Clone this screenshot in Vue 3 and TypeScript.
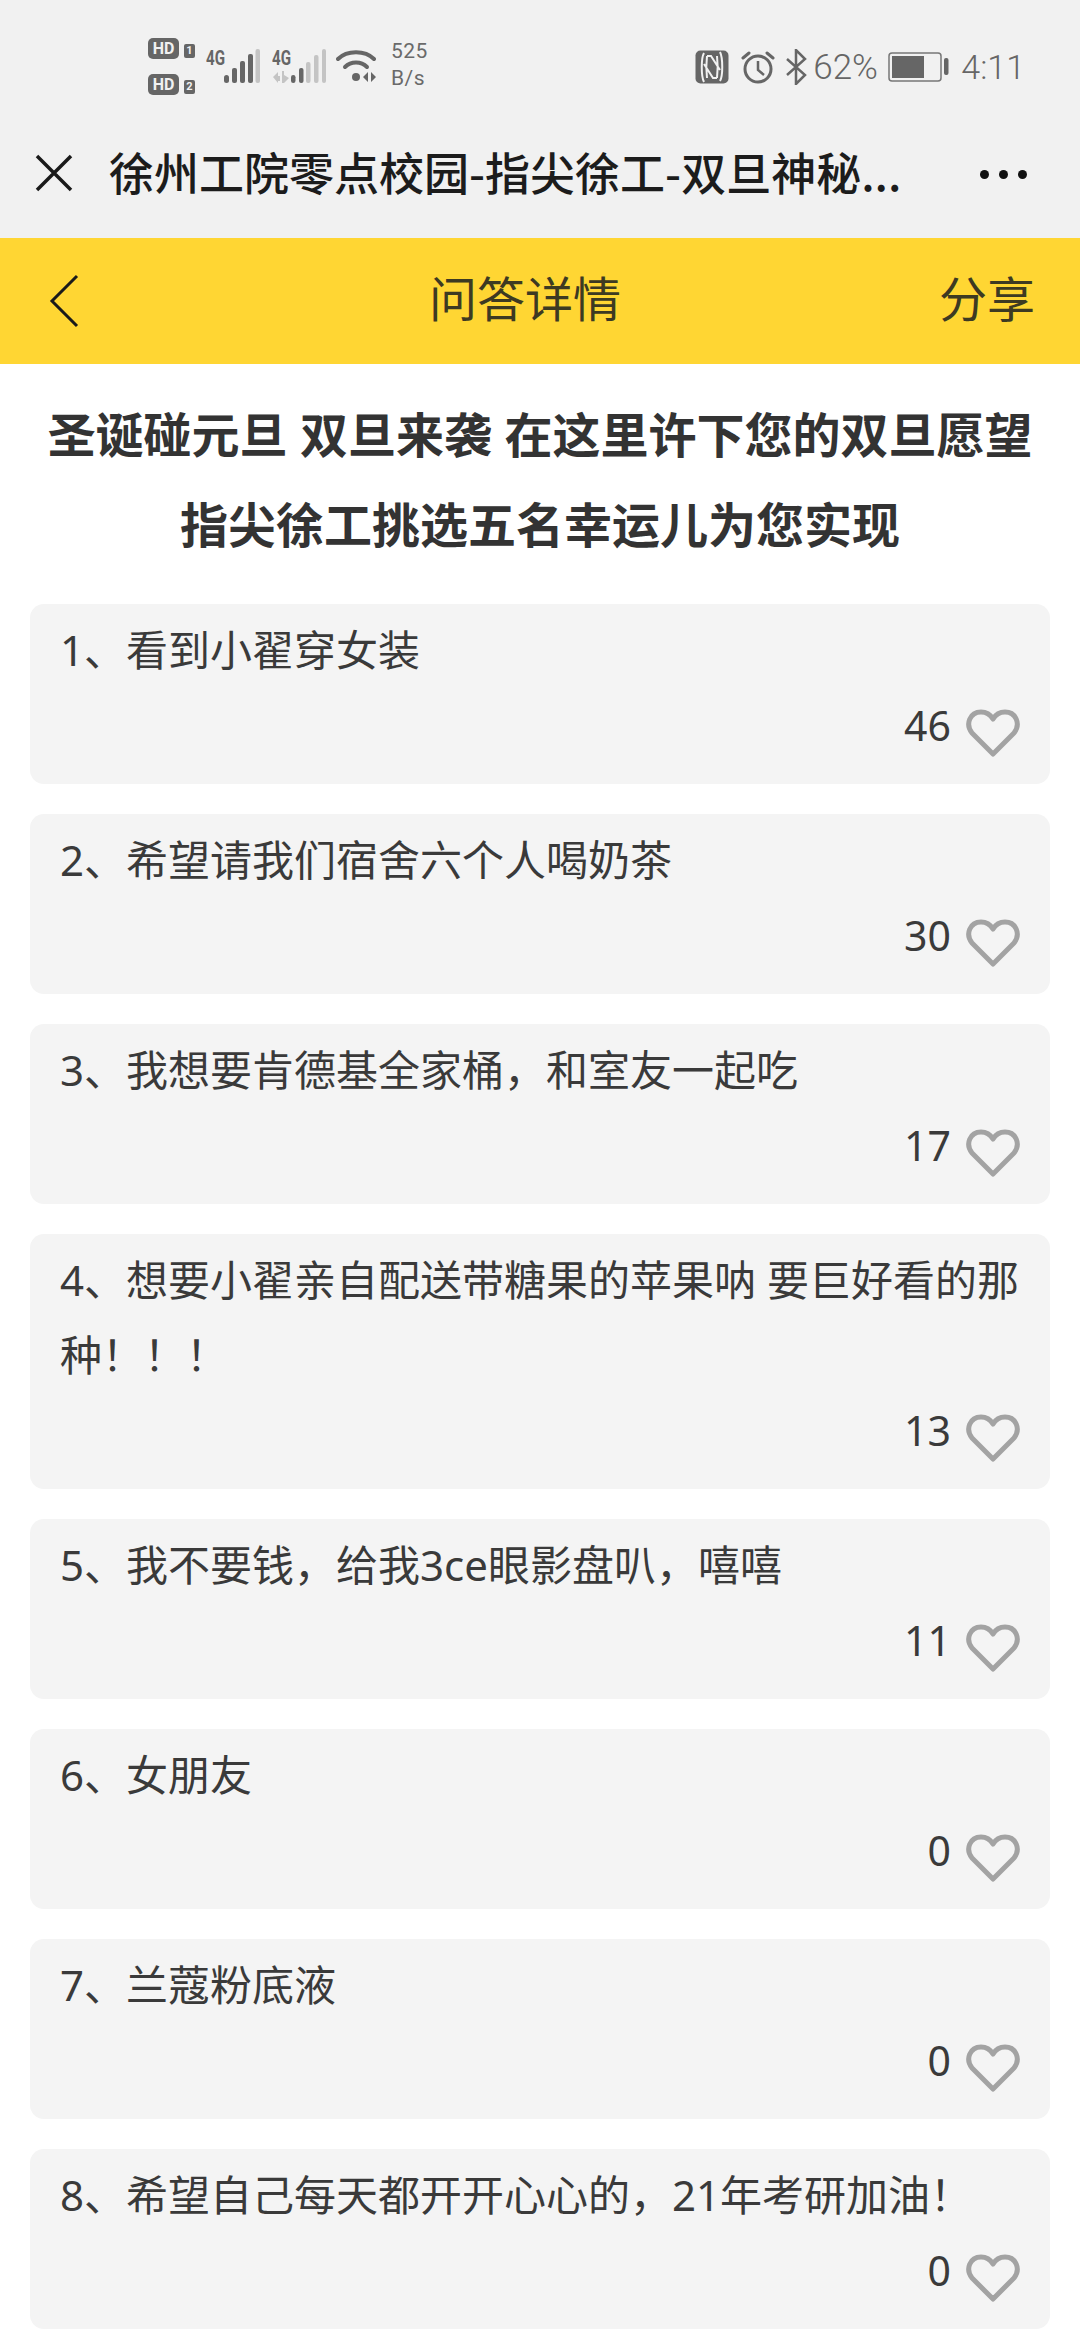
<script setup lang="ts">
interface Item { text: string; count: number }
const items: Item[] = [
  { text: '1、看到小翟穿女装', count: 46 },
  { text: '2、希望请我们宿舍六个人喝奶茶', count: 30 },
  { text: '3、我想要肯德基全家桶，和室友一起吃', count: 17 },
  { text: '4、想要小翟亲自配送带糖果的苹果呐 要巨好看的那种！！！', count: 13 },
  { text: '5、我不要钱，给我3ce眼影盘叭，嘻嘻', count: 11 },
  { text: '6、女朋友', count: 0 },
  { text: '7、兰蔻粉底液', count: 0 },
  { text: '8、希望自己每天都开开心心的，21年考研加油！', count: 0 },
]
</script>

<template>
  <div class="page">
    <div class="status">
      <div class="status-left">
        <div class="hd-col">
          <div class="hd-row"><span class="hd">HD</span><span class="sim">1</span></div>
          <div class="hd-row"><span class="hd">HD</span><span class="sim">2</span></div>
        </div>
        <svg class="sig" width="54" height="44" viewBox="0 -8 54 44">
          <text x="0" y="17" class="g4" textLength="19" lengthAdjust="spacingAndGlyphs">4G</text>
          <g fill="#666"><rect x="18" y="27" width="5" height="8" rx="2.500"/><rect x="26" y="20" width="5" height="15" rx="2"/><rect x="34" y="13" width="5" height="22" rx="2"/><rect x="42" y="6" width="5" height="29" rx="2"/></g>
          <rect x="49.500" y="1" width="4.500" height="34" rx="2" fill="#c4c4c4"/>
        </svg>
        <svg class="sig2" width="54" height="44" viewBox="0 -8 54 44">
          <text x="0" y="17" class="g4" textLength="19" lengthAdjust="spacingAndGlyphs">4G</text>
          <path d="M1 29l5-5v4h2v5H6v2zM10 23h2v4l5 3-5 5h-2z" fill="#c4c4c4"/>
          <g fill="#666"><rect x="19" y="27" width="4.500" height="8" rx="2.200"/><rect x="27" y="20" width="4.500" height="15" rx="2"/></g>
          <g fill="#c4c4c4"><rect x="34" y="14" width="4.500" height="21" rx="2"/><rect x="42" y="7" width="4.500" height="28" rx="2"/><rect x="50" y="1" width="4" height="34" rx="2"/></g>
        </svg>
        <svg class="wifi" width="42" height="36" viewBox="0 0 42 36">
          <g fill="none" stroke="#666" stroke-width="4" stroke-linecap="round">
            <path d="M2 11C11 2 29 2 38 11"/>
            <path d="M9 19C15 13 25 13 31 19"/>
          </g>
          <circle cx="20" cy="29" r="4" fill="#666"/>
          <path d="M32 24v10l-5-5zM35 24l5 5-5 5z" fill="#666"/>
        </svg>
        <div class="speed"><span>525</span><span>B/s</span></div>
      </div>
      <div class="status-right">
        <svg width="34" height="34" viewBox="0 0 34 34">
          <rect x="0.500" y="0.500" width="33" height="33" rx="5" fill="#666"/>
          <path d="M9 32C6 26 6 8 9 3" fill="none" stroke="#f1f1f1" stroke-width="2"/>
          <path d="M25 2C28 8 28 26 25 31" fill="none" stroke="#f1f1f1" stroke-width="2"/>
          <path d="M12 6h4l9 14M12 6c-1 8-1 14 0 22M22 28h-4L9 14M22 28c1-8 1-14 0-22" fill="none" stroke="#f1f1f1" stroke-width="2"/>
        </svg>
        <svg class="alarm" width="34" height="34" viewBox="0 0 34 34">
          <g fill="none" stroke="#666" stroke-width="3">
            <circle cx="17" cy="19" r="13"/>
            <path d="M17 11v9l6 5" stroke-width="2.500"/>
            <path d="M2 8l6-5M32 8l-6-5" stroke-linecap="round"/>
          </g>
        </svg>
        <svg class="bt" width="22" height="36" viewBox="0 0 22 36">
          <path d="M2 10l18 16-9 9V1l9 9L2 26" fill="none" stroke="#666" stroke-width="2.500"/>
        </svg>
        <span class="pct">62%</span>
        <svg class="batt" width="61" height="30" viewBox="0 0 61 30">
          <rect x="1" y="1" width="52" height="28" rx="3" fill="none" stroke="#777" stroke-width="1.500"/>
          <rect x="4" y="4" width="32" height="22" fill="#666"/>
          <rect x="56" y="6" width="4.500" height="17" rx="2" fill="#666"/>
        </svg>
        <span class="time">4:11</span>
      </div>
    </div>

    <div class="titlebar">
      <svg class="close" width="38" height="38" viewBox="0 0 38 38">
        <path d="M2 2l34 34M36 2L2 36" stroke="#1a1a1a" stroke-width="3.500" fill="none"/>
      </svg>
      <div class="title">徐州工院零点校园-指尖徐工-双旦神秘...</div>
      <div class="more"><i></i><i></i><i></i></div>
    </div>

    <div class="nav">
      <svg class="back" width="30" height="54" viewBox="0 0 30 54">
        <path d="M28 2L3 27l25 25" fill="none" stroke="#1a1a1a" stroke-width="3"/>
      </svg>
      <div class="nav-title">问答详情</div>
      <div class="share">分享</div>
    </div>

    <div class="heading">
      <div>圣诞碰元旦 双旦来袭 在这里许下您的双旦愿望</div>
      <div>指尖徐工挑选五名幸运儿为您实现</div>
    </div>

    <div class="list">
      <div v-for="item in items" :key="item.text" class="card">
        <div class="text">{{ item.text }}</div>
        <div class="meta">
          <span class="count">{{ item.count }}</span>
          <svg class="heart" width="54" height="50" viewBox="0 0 54 50">
            <path d="M27 46L6 25C-1 16 4 4 15 4c5 0 9 2 12 7 3-5 7-7 12-7 11 0 16 12 9 21z" fill="none" stroke="#a3a3a3" stroke-width="5" stroke-linejoin="round"/>
          </svg>
        </div>
      </div>
    </div>
  </div>
</template>

<style>
html, body { margin: 0; background: #fff; }
</style>

<style scoped>
.page {
  width: 1080px;
  height: 2340px;
  overflow: hidden;
  background: #fff;
  font-family: "Noto Sans", "Noto Sans CJK SC", sans-serif;
}
.status {
  height: 110px;
  background: #f1f1f1;
  display: flex;
  justify-content: space-between;
  align-items: flex-start;
  padding: 0 55px 0 148px;
  box-sizing: border-box;
  color: #666;
  font-family: Roboto, sans-serif;
}
.status-left { display: flex; align-items: flex-start; padding-top: 38px; }
.status-right { display: flex; align-items: center; padding-top: 49px; height: 36px; }
.hd-col { display: flex; flex-direction: column; gap: 15px; width: 58px; }
.hd-row { display: flex; align-items: center; height: 21px; gap: 5px; }
.hd {
  display: flex;
  align-items: center;
  justify-content: center;
  width: 31px;
  height: 21px;
  border-radius: 5px;
  background: #666;
  color: #f1f1f1;
  font: 700 16px/1 Roboto, sans-serif;
}
.sim {
  display: flex;
  align-items: center;
  justify-content: center;
  width: 11px;
  height: 14px;
  margin-top: 4px;
  border-radius: 2px;
  background: #666;
  color: #f1f1f1;
  font: 700 11px/1 Roboto, sans-serif;
}
.sig { margin-top: 2px; }
.sig2 { margin: 2px 0 0 12px; }
.wifi { margin: 10px 0 0 10px; }
.g4 { font: 700 20px Roboto, sans-serif; fill: #666; }
.speed {
  display: flex;
  flex-direction: column;
  margin-left: 13px;
  font-size: 21px;
  line-height: 27px;
  letter-spacing: 0.5px;
  color: #6a6a6a;
}
.alarm { margin-left: 12px; }
.bt { margin-left: 10px; }
.pct { margin-left: 6px; font-size: 35px; font-weight: 300; width: 69px; }
.batt { margin-left: 6px; }
.time { margin-left: 12px; font-size: 34px; font-weight: 300; }

.titlebar {
  height: 128px;
  background: #f1f1f1;
  display: flex;
  align-items: center;
  padding: 0 53px 0 35px;
  box-sizing: border-box;
}
.close { flex: none; margin-bottom: 2px; }
.title {
  margin: 0 0 5px 36px;
  flex: 1;
  font-size: 45px;
  font-weight: 500;
  color: #1c1c1c;
  white-space: nowrap;
  font-family: "Noto Sans CJK SC", sans-serif;
}
.more { display: flex; gap: 10px; }
.more i { width: 9px; height: 9px; border-radius: 50%; background: #111; display: block; }

.nav {
  height: 126px;
  background: #ffd633;
  display: flex;
  align-items: center;
  padding: 0 45px 0 49px;
  box-sizing: border-box;
}
.back { flex: none; }
.nav-title {
  flex: 1;
  text-align: center;
  font-size: 48px;
  color: #3d3a22;
  padding: 0 0 10px 32px;
}
.share { font-size: 48px; color: #3d3a22; padding-bottom: 10px; }

.heading {
  padding: 26px 0 34px;
  text-align: center;
  font-size: 48px;
  font-weight: 700;
  line-height: 90px;
  color: #333;
}
.list { display: flex; flex-direction: column; gap: 30px; padding: 0 30px; }
.card {
  background: #f4f4f4;
  border-radius: 14px;
  padding: 8px 15px 0 30px;
  min-height: 180px;
  box-sizing: border-box;
}
.text { font-size: 42px; line-height: 75px; color: #3a3a3a; }
.meta { display: flex; justify-content: flex-end; align-items: flex-start; height: 97px; padding-right: 15px; }
.count { font-size: 41px; line-height: 75px; color: #3a3a3a; margin-top: 1px; }
.heart { margin: 21px 0 0 15px; }
</style>
